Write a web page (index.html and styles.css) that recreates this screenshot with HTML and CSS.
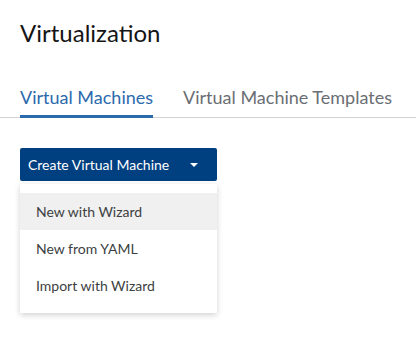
FILE: index.html
```html
<!DOCTYPE html>
<html lang="en">
<head>
  <meta charset="UTF-8">
  <title>Virtualization</title>
  <link rel="stylesheet" href="styles.css">
</head>
<body>

<header class="page-header">
  <h1>Virtualization</h1>
</header>

<nav class="tabs">
  <a class="tab active" href="#">Virtual Machines</a>
  <a class="tab" href="#">Virtual Machine Templates</a>
</nav>

<section class="toolbar">
  <div class="dropdown">
    <button class="dropdown-toggle">
      <span>Create Virtual Machine</span>
      <span class="caret"></span>
    </button>
    <ul class="dropdown-menu">
      <li class="hover">New with Wizard</li>
      <li>New from YAML</li>
      <li>Import with Wizard</li>
    </ul>
  </div>
</section>

</body>
</html>
```

FILE: styles.css
```css
body {
  margin: 0;
  font-family: Lato, "Liberation Sans", sans-serif;
  background: #fff;
  color: #151515;
}
.page-header {
  padding: 17px 20px 0;
}
.page-header h1 {
  margin: 0;
  font-size: 24px;
  font-weight: 400;
  line-height: 32px;
}
.tabs {
  display: flex;
  gap: 30px;
  margin-top: 36px;
  padding: 0 20px;
  border-bottom: 1px solid #d2d2d2;
  white-space: nowrap;
}
.tab {
  font-size: 18px;
  line-height: 24px;
  padding-bottom: 6px;
  color: #6a6e73;
  text-decoration: none;
  border-bottom: 3px solid transparent;
  margin-bottom: -1px;
}
.tab.active {
  color: #2b6aad;
  border-bottom-color: #2b6aad;
}
.toolbar {
  padding: 30px 20px;
}
.dropdown {
  display: inline-block;
  width: 197px;
}
.dropdown-toggle {
  display: flex;
  align-items: center;
  justify-content: space-between;
  width: 100%;
  height: 33px;
  padding: 0 19px 0 8px;
  border: 0;
  border-radius: 2px;
  background: #004080;
  color: #fff;
  font-family: inherit;
  font-size: 14px;
}
.caret {
  width: 0;
  height: 0;
  border-left: 4px solid transparent;
  border-right: 4px solid transparent;
  border-top: 4px solid #fff;
}
.dropdown-menu {
  list-style: none;
  margin: 3px 0 0;
  padding: 9px 0;
  background: #fff;
  box-shadow: 0 2px 6px rgba(0,0,0,0.18);
}
.dropdown-menu li {
  padding: 0 16px;
  height: 37px;
  line-height: 37px;
  font-size: 14px;
  color: #3c3f42;
}
.dropdown-menu li.hover {
  background: #f0f0f0;
}
```
